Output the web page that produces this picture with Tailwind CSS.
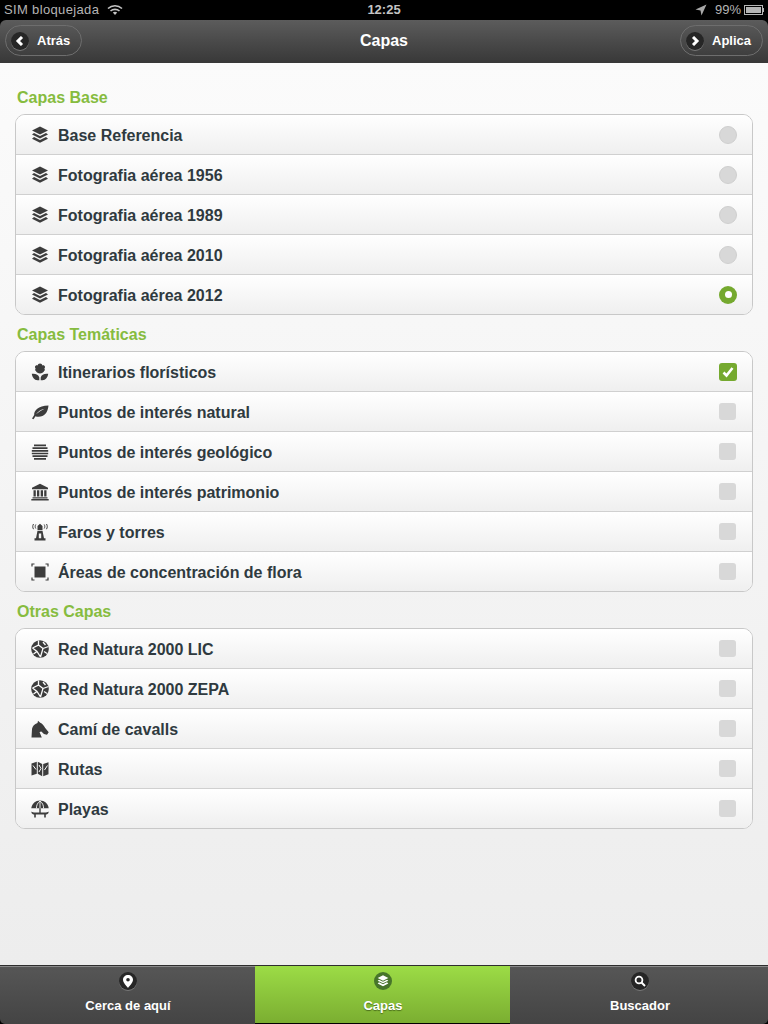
<!DOCTYPE html>
<html lang="es">
<head>
    <meta charset="UTF-8">
    <meta name="viewport" content="width=device-width, initial-scale=1.0">
    <title>Capas</title>
    <script src="https://cdn.jsdelivr.net/npm/@tailwindcss/browser@4"></script>
</head>
<body class="bg-black font-['Liberation_Sans',Arial,sans-serif]">
<svg class="hidden">
    <symbol id="i-layers" viewBox="0 0 18 18"><path fill="currentColor" d="M9 .5 17 4.500 9 8.500 1 4.500Z"/><path fill="currentColor" d="M3 7 9 10 15 7 17 8.500 9 12.500 1 8.500Z"/><path fill="currentColor" d="M3 11 9 14 15 11 17 12.800 9 16.800 1 12.800Z"/></symbol>
    <symbol id="i-flower" viewBox="0 0 18 18"><path fill="currentColor" d="M9 .5C10.300 .5 11.200 1.400 11.400 2.400 12.600 2 13.900 2.600 14 3.800 14.100 4.600 13.700 5.200 13.300 5.500 14 6.200 14 7.400 13.200 8 12.400 9.600 10.800 10.500 9 10.500S5.600 9.600 4.800 8C4 7.400 4 6.200 4.700 5.500 4.300 5.200 3.900 4.600 4 3.800 4.100 2.600 5.400 2 6.600 2.400 6.800 1.400 7.700 .5 9 .5Z"/><path fill="currentColor" d="M.8 10.800C4.500 10.300 7.500 11.600 8.300 14.400V17.300H6.500C3.300 17.300 1.200 14.300 .8 10.800ZM17.200 10.800C13.500 10.300 10.500 11.600 9.700 14.400V17.300H11.500C14.700 17.300 16.800 14.300 17.200 10.800Z"/></symbol>
    <symbol id="i-leaf" viewBox="0 0 18 18"><path fill="currentColor" d="M17.500 2.500C16.800 9.500 13.500 13.800 7.500 13.800 6.300 13.800 5.300 13.600 4.500 13.200L2.500 16.300 1 15.400 3.200 12C2.800 7.500 7 3 17.500 2.500ZM13.500 5.800C10 6.700 6.800 8.600 5 11.300 7.700 9.100 10.400 7.200 13.500 5.800Z"/></symbol>
    <symbol id="i-lines" viewBox="0 0 18 18"><path stroke="currentColor" stroke-width="1.700" d="M3 2.400H15M1.500 5.100H16.500M.8 7.800H17.200M.8 10.500H17.200M1.500 13.200H16.500M3 15.900H15"/></symbol>
    <symbol id="i-bank" viewBox="0 0 18 18"><path fill="currentColor" d="M9 .8 17 4.800V6.300H1V4.800Z"/><path fill="currentColor" d="M2.500 7.300H4.800V13.500H2.500ZM6 7.300H8.300V13.500H6ZM9.700 7.300H12V13.500H9.700ZM13.200 7.300H15.500V13.500H13.200ZM1.500 14.200H16.500V15.600H1.500ZM.3 16H17.700V17.400H.3Z"/></symbol>
    <symbol id="i-tower" viewBox="0 0 18 18"><path fill="currentColor" d="M9 .8 11.500 3V7H6.500V3ZM6.500 7.800H11.500L13 15.200H14.500V17.500H3.500V15.200H5ZM7.800 10.500V15.200H10.200V10.500Z"/><path fill="none" stroke="currentColor" stroke-width="1" d="M4.800 1.500C4 2.800 4 4.200 4.800 5.500M2.500 1C1.500 2.800 1.500 4.400 2.500 6.200M13.200 1.500C14 2.800 14 4.200 13.200 5.500M15.500 1C16.500 2.800 16.500 4.400 15.500 6.200"/></symbol>
    <symbol id="i-area" viewBox="0 0 18 18"><path fill="currentColor" d="M3.500 3.500H14.500V14.500H3.500Z"/><path fill="none" stroke="currentColor" stroke-width="1.200" d="M1 3.500V1H3.500M14.500 1H17V3.500M17 14.500V17H14.500M3.500 17H1V14.500"/></symbol>
    <symbol id="i-globe" viewBox="0 0 18 18"><circle cx="9" cy="9" r="8.800" fill="currentColor"/><path fill="none" stroke="#fafafa" stroke-width="1.300" d="M1.500 8 7.500 5 7.500 .5M7.500 5 12 8.500 9.500 17M12 8.500 17.500 6.500M12 2 14.500 5M1.500 8 6 11.500 9.500 17M6 11.500 2.500 14M13 11.500 16 13.500"/></symbol>
    <symbol id="i-horse" viewBox="0 0 18 18"><path fill="currentColor" d="M.5 17.500 1 9C1.500 6 3.500 4 6.500 3L7 .8 9.200 2.800C11.300 3.500 12.800 5.500 14.200 8L17.700 12.200 16 14.800 13 14 10.300 11.500 8.500 12 10.800 17.500Z"/></symbol>
    <symbol id="i-map" viewBox="0 0 18 18"><path fill="currentColor" d="M.5 3.500 5.800 1.800V13.800L.5 15.500ZM6.800 1.800 11.200 4V16.200L6.800 13.800ZM12.200 4 17.500 2.300V14.300L12.200 16.200Z"/><path stroke="#fafafa" stroke-width="1" fill="none" d="M2 5.500 5 9.500M8 5 10 8.500 8 12M13.500 10 16.500 5.500"/></symbol>
    <symbol id="i-beach" viewBox="0 0 18 18"><path fill="currentColor" d="M9 .5C13.500 .5 17 3.500 17.700 8.300H.3C1 3.500 4.500 .5 9 .5Z"/><path stroke="#fafafa" stroke-width=".9" fill="none" d="M9 .8V8.300M9 1C6.500 2.800 5.400 5.500 5.400 8.300M9 1C11.500 2.800 12.600 5.500 12.600 8.300"/><path fill="currentColor" d="M8.300 8.300H9.700V12.500H8.300ZM.5 11.500C1.500 12.300 2.500 12.600 4 12.600H14C15.500 12.600 16.500 12.300 17.500 11.500V13C16.500 14.200 15.500 14.500 14.800 14.500V17.500H13.200V14.500H4.800V17.500H3.200V14.500C2.500 14.500 1.500 14.200 .5 13Z"/></symbol>
</svg>

<div class="w-[768px] h-[1024px] flex flex-col overflow-hidden">
    <!-- status bar -->
    <div class="h-5 bg-black flex items-center justify-between pl-1 pr-1 text-[13px] leading-5 text-[#b5b5b5] relative">
        <div class="flex items-center gap-[8px]">
            <span class="tracking-[0.35px]">SIM bloquejada</span>
            <svg width="16" height="12" viewBox="0 0 16 12" class="text-[#c4c4c4]"><path fill="none" stroke="currentColor" stroke-width="1.600" d="M1 4.500C5 .8 11 .8 15 4.500M3.500 7C6 4.800 10 4.800 12.500 7"/><path fill="currentColor" d="M5.800 8.500C7.200 7.600 8.800 7.600 10.200 8.500L8 11Z"/></svg>
        </div>
        <span class="absolute left-0 right-0 text-center font-bold text-[13px] text-[#c4c4c4]">12:25</span>
        <div class="flex items-center">
            <svg width="12" height="12" viewBox="0 0 12 12" class="text-[#a8a8a8] mr-[8px]"><path fill="currentColor" d="M11.500 .5 6.500 11.500 5.500 6.500 .5 5.500Z"/></svg>
            <span class="mr-[3px]">99%</span>
            <div class="w-[19px] h-[10px] border border-[#b5b5b5] p-px"><div class="h-full bg-[#b5b5b5]"></div></div>
            <div class="w-px h-1 bg-[#b5b5b5]"></div>
        </div>
    </div>

    <!-- header -->
    <div class="h-[43px] pb-[2px] rounded-t-[6px] bg-gradient-to-b from-[#5c5c5c] to-[#383838] flex items-center justify-between px-[5px] relative">
        <div class="w-[77px] h-[31px] rounded-full border border-[#6e6e6e] flex items-center pl-[5px] gap-[8px]">
            <div class="mt-px w-[18px] h-[18px] rounded-full bg-[#262626] flex items-center justify-center shadow-[0_1px_0_#777]">
                <svg width="10" height="10" viewBox="0 0 10 10"><path fill="none" stroke="#fff" stroke-width="3" d="M7 1 3 5 7 9"/></svg>
            </div>
            <span class="text-[13px] font-bold text-white">Atrás</span>
        </div>
        <span class="absolute left-0 right-0 text-center text-base font-bold text-white pointer-events-none">Capas</span>
        <div class="w-[83px] h-[31px] rounded-full border border-[#6e6e6e] flex items-center pl-[5px] gap-[8px]">
            <div class="mt-px w-[18px] h-[18px] rounded-full bg-[#262626] flex items-center justify-center shadow-[0_1px_0_#777]">
                <svg width="10" height="10" viewBox="0 0 10 10"><path fill="none" stroke="#fff" stroke-width="3" d="M3 1 7 5 3 9"/></svg>
            </div>
            <span class="text-[13px] font-bold text-white">Aplica</span>
        </div>
    </div>

    <!-- content -->
    <div class="flex-1 bg-gradient-to-b from-[#fbfbfb] to-[#ededed] px-[15px] pt-[15px] text-[#2f3a3f]">
        <h2 class="h-9 pl-[2px] pt-[10px] leading-[20px] text-base font-bold text-[#86bc3f]">Capas Base</h2>
        <div class="rounded-[10px] border border-[#c8c8c8] bg-white overflow-hidden">
            <div class="h-[40px] border-b border-[#d0d0d0] bg-gradient-to-b from-white to-[#efefef] flex items-center pl-[15px] pr-[15px]">
                <svg class="w-[18px] h-[18px] text-[#3c3c3c] mr-[9px]"><use href="#i-layers"/></svg>
                <span class="flex-1 pt-[2px] text-base font-bold">Base Referencia</span>
                <div class="w-[18px] h-[18px] rounded-full bg-[#d8d8d8] border border-[#cfcfcf]"></div>
            </div>
            <div class="h-[40px] border-b border-[#d0d0d0] bg-gradient-to-b from-white to-[#efefef] flex items-center pl-[15px] pr-[15px]">
                <svg class="w-[18px] h-[18px] text-[#3c3c3c] mr-[9px]"><use href="#i-layers"/></svg>
                <span class="flex-1 pt-[2px] text-base font-bold">Fotografia aérea 1956</span>
                <div class="w-[18px] h-[18px] rounded-full bg-[#d8d8d8] border border-[#cfcfcf]"></div>
            </div>
            <div class="h-[40px] border-b border-[#d0d0d0] bg-gradient-to-b from-white to-[#efefef] flex items-center pl-[15px] pr-[15px]">
                <svg class="w-[18px] h-[18px] text-[#3c3c3c] mr-[9px]"><use href="#i-layers"/></svg>
                <span class="flex-1 pt-[2px] text-base font-bold">Fotografia aérea 1989</span>
                <div class="w-[18px] h-[18px] rounded-full bg-[#d8d8d8] border border-[#cfcfcf]"></div>
            </div>
            <div class="h-[40px] border-b border-[#d0d0d0] bg-gradient-to-b from-white to-[#efefef] flex items-center pl-[15px] pr-[15px]">
                <svg class="w-[18px] h-[18px] text-[#3c3c3c] mr-[9px]"><use href="#i-layers"/></svg>
                <span class="flex-1 pt-[2px] text-base font-bold">Fotografia aérea 2010</span>
                <div class="w-[18px] h-[18px] rounded-full bg-[#d8d8d8] border border-[#cfcfcf]"></div>
            </div>
            <div class="h-[39px] bg-gradient-to-b from-white to-[#efefef] flex items-center pl-[15px] pr-[15px]">
                <svg class="w-[18px] h-[18px] text-[#3c3c3c] mr-[9px]"><use href="#i-layers"/></svg>
                <span class="flex-1 pt-[2px] text-base font-bold">Fotografia aérea 2012</span>
                <div class="w-[18px] h-[18px] rounded-full bg-[#75a92f] flex items-center justify-center"><div class="w-[7px] h-[7px] rounded-full bg-white"></div></div>
            </div>
        </div>

        <h2 class="h-9 pl-[2px] pt-[10px] leading-[20px] text-base font-bold text-[#86bc3f]">Capas Temáticas</h2>
        <div class="rounded-[10px] border border-[#c8c8c8] bg-white overflow-hidden">
            <div class="h-[40px] border-b border-[#d0d0d0] bg-gradient-to-b from-white to-[#efefef] flex items-center pl-[15px] pr-[15px]">
                <svg class="w-[18px] h-[18px] text-[#3c3c3c] mr-[9px]"><use href="#i-flower"/></svg>
                <span class="flex-1 pt-[2px] text-base font-bold">Itinerarios florísticos</span>
                <div class="w-[18px] h-[18px] rounded-[3px] bg-[#75a92f] flex items-center justify-center">
                    <svg width="12" height="12" viewBox="0 0 12 12"><path fill="none" stroke="#fff" stroke-width="2.600" d="M1.500 6.500 4.500 9.500 10.500 2"/></svg>
                </div>
            </div>
            <div class="h-[40px] border-b border-[#d0d0d0] bg-gradient-to-b from-white to-[#efefef] flex items-center pl-[15px] pr-[15px]">
                <svg class="w-[18px] h-[18px] text-[#3c3c3c] mr-[9px]"><use href="#i-leaf"/></svg>
                <span class="flex-1 pt-[2px] text-base font-bold">Puntos de interés natural</span>
                <div class="mr-px w-[17px] h-[17px] rounded-[3px] bg-[#d8d8d8]"></div>
            </div>
            <div class="h-[40px] border-b border-[#d0d0d0] bg-gradient-to-b from-white to-[#efefef] flex items-center pl-[15px] pr-[15px]">
                <svg class="w-[18px] h-[18px] text-[#3c3c3c] mr-[9px]"><use href="#i-lines"/></svg>
                <span class="flex-1 pt-[2px] text-base font-bold">Puntos de interés geológico</span>
                <div class="mr-px w-[17px] h-[17px] rounded-[3px] bg-[#d8d8d8]"></div>
            </div>
            <div class="h-[40px] border-b border-[#d0d0d0] bg-gradient-to-b from-white to-[#efefef] flex items-center pl-[15px] pr-[15px]">
                <svg class="w-[18px] h-[18px] text-[#3c3c3c] mr-[9px]"><use href="#i-bank"/></svg>
                <span class="flex-1 pt-[2px] text-base font-bold">Puntos de interés patrimonio</span>
                <div class="mr-px w-[17px] h-[17px] rounded-[3px] bg-[#d8d8d8]"></div>
            </div>
            <div class="h-[40px] border-b border-[#d0d0d0] bg-gradient-to-b from-white to-[#efefef] flex items-center pl-[15px] pr-[15px]">
                <svg class="w-[18px] h-[18px] text-[#3c3c3c] mr-[9px]"><use href="#i-tower"/></svg>
                <span class="flex-1 pt-[2px] text-base font-bold">Faros y torres</span>
                <div class="mr-px w-[17px] h-[17px] rounded-[3px] bg-[#d8d8d8]"></div>
            </div>
            <div class="h-[39px] bg-gradient-to-b from-white to-[#efefef] flex items-center pl-[15px] pr-[15px]">
                <svg class="w-[18px] h-[18px] text-[#3c3c3c] mr-[9px]"><use href="#i-area"/></svg>
                <span class="flex-1 pt-[2px] text-base font-bold">Áreas de concentración de flora</span>
                <div class="mr-px w-[17px] h-[17px] rounded-[3px] bg-[#d8d8d8]"></div>
            </div>
        </div>

        <h2 class="h-9 pl-[2px] pt-[10px] leading-[20px] text-base font-bold text-[#86bc3f]">Otras Capas</h2>
        <div class="rounded-[10px] border border-[#c8c8c8] bg-white overflow-hidden">
            <div class="h-[40px] border-b border-[#d0d0d0] bg-gradient-to-b from-white to-[#efefef] flex items-center pl-[15px] pr-[15px]">
                <svg class="w-[18px] h-[18px] text-[#3c3c3c] mr-[9px]"><use href="#i-globe"/></svg>
                <span class="flex-1 pt-[2px] text-base font-bold">Red Natura 2000 LIC</span>
                <div class="mr-px w-[17px] h-[17px] rounded-[3px] bg-[#d8d8d8]"></div>
            </div>
            <div class="h-[40px] border-b border-[#d0d0d0] bg-gradient-to-b from-white to-[#efefef] flex items-center pl-[15px] pr-[15px]">
                <svg class="w-[18px] h-[18px] text-[#3c3c3c] mr-[9px]"><use href="#i-globe"/></svg>
                <span class="flex-1 pt-[2px] text-base font-bold">Red Natura 2000 ZEPA</span>
                <div class="mr-px w-[17px] h-[17px] rounded-[3px] bg-[#d8d8d8]"></div>
            </div>
            <div class="h-[40px] border-b border-[#d0d0d0] bg-gradient-to-b from-white to-[#efefef] flex items-center pl-[15px] pr-[15px]">
                <svg class="w-[18px] h-[18px] text-[#3c3c3c] mr-[9px]"><use href="#i-horse"/></svg>
                <span class="flex-1 pt-[2px] text-base font-bold">Camí de cavalls</span>
                <div class="mr-px w-[17px] h-[17px] rounded-[3px] bg-[#d8d8d8]"></div>
            </div>
            <div class="h-[40px] border-b border-[#d0d0d0] bg-gradient-to-b from-white to-[#efefef] flex items-center pl-[15px] pr-[15px]">
                <svg class="w-[18px] h-[18px] text-[#3c3c3c] mr-[9px]"><use href="#i-map"/></svg>
                <span class="flex-1 pt-[2px] text-base font-bold">Rutas</span>
                <div class="mr-px w-[17px] h-[17px] rounded-[3px] bg-[#d8d8d8]"></div>
            </div>
            <div class="h-[39px] bg-gradient-to-b from-white to-[#efefef] flex items-center pl-[15px] pr-[15px]">
                <svg class="w-[18px] h-[18px] text-[#3c3c3c] mr-[9px]"><use href="#i-beach"/></svg>
                <span class="flex-1 pt-[2px] text-base font-bold">Playas</span>
                <div class="mr-px w-[17px] h-[17px] rounded-[3px] bg-[#d8d8d8]"></div>
            </div>
        </div>
    </div>

    <!-- tab bar -->
    <div class="h-[59px] bg-black rounded-b-[4px] flex border-t border-[#2e2e2e] text-[13px] font-bold text-white">
        <div class="w-[255px] pl-px border-t border-[#8a8a8a] bg-gradient-to-b from-[#565656] to-[#444444] flex flex-col items-center rounded-bl-[5px]">
            <div class="mt-[5px] w-[18px] h-[18px] rounded-full bg-[#262626] flex items-center justify-center shadow-[0_1px_0_#777]">
                <svg width="10" height="13" viewBox="0 0 10 13"><path fill="#fff" fill-rule="evenodd" d="M5 0C7.800 0 10 2.100 10 4.800 10 7.800 6.500 10.800 5 13 3.500 10.800 0 7.800 0 4.800 0 2.100 2.200 0 5 0ZM5 3A1.800 1.800 0 1 0 5 6.600 1.800 1.800 0 1 0 5 3Z"/></svg>
            </div>
            <span class="mt-[6px]">Cerca de aquí</span>
        </div>
        <div class="w-[255px] pl-px bg-gradient-to-b from-[#9cdc46] to-[#7bae31] flex flex-col items-center [text-shadow:0_1px_1px_#4b6f1c] mb-px">
            <div class="mt-[6px] w-[18px] h-[18px] rounded-full bg-[#47752a] flex items-center justify-center">
                <svg class="w-[12px] h-[12px] text-white"><use href="#i-layers"/></svg>
            </div>
            <span class="mt-[6px]">Capas</span>
        </div>
        <div class="flex-1 pl-[2px] border-t border-[#8a8a8a] bg-gradient-to-b from-[#565656] to-[#444444] flex flex-col items-center rounded-br-[5px]">
            <div class="mt-[5px] w-[18px] h-[18px] rounded-full bg-[#262626] flex items-center justify-center shadow-[0_1px_0_#777]">
                <svg width="12" height="12" viewBox="0 0 12 12"><circle cx="5" cy="5" r="3.400" fill="none" stroke="#fff" stroke-width="1.800"/><path stroke="#fff" stroke-width="2" d="M7.500 7.500 11 11"/></svg>
            </div>
            <span class="mt-[6px]">Buscador</span>
        </div>
    </div>
</div>
</body>
</html>
